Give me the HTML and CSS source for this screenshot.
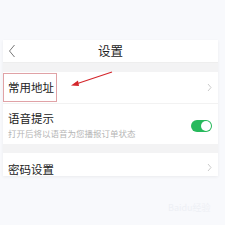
FILE: index.html
```html
<!DOCTYPE html>
<html>
<head>
<meta charset="utf-8">
<link rel="stylesheet" href="styles.css">
</head>
<body>
<div class="page">
  <div class="panel">
    <div class="header">
      <svg class="back" width="8" height="14" viewBox="0 0 8 14"><path d="M6.5 1 L1.5 7 L6.5 13" fill="none" stroke="#777" stroke-width="1"/></svg>
      <div class="title">设置</div>
    </div>
    <div class="gap"></div>
    <div class="row row-addr">
      <div class="label">常用地址</div>
      <svg class="chev" width="5" height="9" viewBox="0 0 5 9"><path d="M1 1 L4 4.5 L1 8" fill="none" stroke="#ccc" stroke-width="1"/></svg>
      <div class="mark"></div>
    </div>
    <div class="row row-voice">
      <div class="texts">
        <div class="label">语音提示</div>
        <div class="sub">打开后将以语音为您播报订单状态</div>
      </div>
      <div class="toggle"><div class="knob"></div></div>
    </div>
    <div class="gap"></div>
    <div class="row row-pwd">
      <div class="label">密码设置</div>
      <svg class="chev" width="5" height="9" viewBox="0 0 5 9"><path d="M1 1 L4 4.5 L1 8" fill="none" stroke="#ccc" stroke-width="1"/></svg>
    </div>
  </div>
  <div class="wm">Baidu经验</div>
  <svg class="arrow" width="225" height="225" viewBox="0 0 225 225"><path d="M112 72 L76 84" stroke="#d4262b" stroke-width="1.3" fill="none"/><path d="M71 85.5 L78 80.5 L79 86 Z" fill="#d4262b"/></svg>
</div>
</body>
</html>
```
FILE: styles.css
```css
html, body { margin: 0; padding: 0; }
body {
  background: #f8f9fc;
  font-family: "Noto Sans CJK SC", "Noto Sans", sans-serif;
  width: 225px;
  height: 225px;
  overflow: hidden;
}
.page { position: relative; width: 225px; height: 225px; padding-top: 40px; box-sizing: border-box; }
.panel {
  margin-left: 3px;
  width: 215px;
  background: #fff;
  box-shadow: 0 1px 3px rgba(0,0,0,0.06);
}
.header {
  height: 23px;
  display: flex;
  align-items: center;
  justify-content: center;
  position: relative;
  border-bottom: 1px solid #eee;
  box-sizing: border-box;
}
.back { position: absolute; left: 5px; top: 4px; }
.title { font-size: 12.5px; color: #222; line-height: 1; }
.gap { height: 9px; background: #f3f3f4; }
.row {
  display: flex;
  align-items: center;
  justify-content: space-between;
  padding: 0 6px 0 5px;
  position: relative;
}
.label { font-size: 11.5px; color: #222; line-height: 1; }
.row-addr { height: 32px; border-bottom: 1px solid #f2f2f2; box-sizing: border-box; }
.row-addr .label { margin-top: 1px; }
.mark {
  position: absolute;
  left: 0;
  top: 1px;
  width: 54px;
  height: 29px;
  border: 1px solid #e0a2a6;
  box-sizing: border-box;
}
.row-voice { height: 40px; }
.texts { display: flex; flex-direction: column; gap: 5px; margin-top: 2px; }
.sub { font-size: 8.5px; color: #b5b5b5; line-height: 1; white-space: nowrap; }
.toggle {
  width: 21px;
  height: 12px;
  border-radius: 6px;
  background: #27b95c;
  position: relative;
  margin-top: 3px;
}
.knob {
  position: absolute;
  right: 1px;
  top: 1px;
  width: 10px;
  height: 10px;
  border-radius: 50%;
  background: #fff;
}
.row-pwd { height: 23px; align-items: flex-end; padding-bottom: 1px; box-sizing: border-box; }
.row-pwd .chev { margin-bottom: 3px; }
.wm {
  position: absolute;
  left: 168px;
  top: 201px;
  font-size: 9px;
  color: #eef0f5;
}
.arrow { position: absolute; left: 0; top: 0; pointer-events: none; }
```
